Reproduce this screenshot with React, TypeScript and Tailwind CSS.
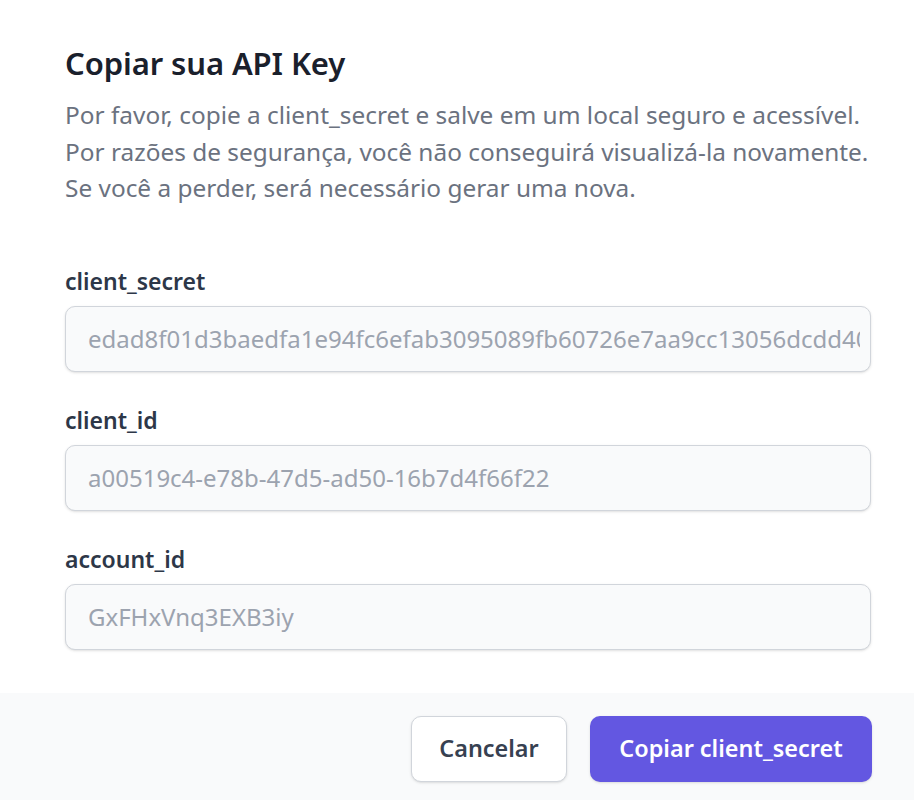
import React from "react";

const fields = [
  {
    label: "client_secret",
    value:
      "edad8f01d3baedfa1e94fc6efab3095089fb60726e7aa9cc13056dcdd40f3a9b27c1e5d8",
  },
  { label: "client_id", value: "a00519c4-e78b-47d5-ad50-16b7d4f66f22" },
  { label: "account_id", value: "GxFHxVnq3EXB3iy" },
];

export default function App() {
  return (
    <div className="w-[914px] h-[800px] bg-white flex flex-col font-['Noto_Sans',sans-serif] overflow-hidden">
      <div className="flex-1 pl-[65px] pr-[43px] pt-[42px]">
        <h2 className="text-[31px] leading-[42px] font-semibold text-[#1a202c] tracking-[-0.1px]">
          Copiar sua API Key
        </h2>
        <p className="mt-[13px] text-[24.4px] leading-[36.5px] text-[#6b7280]">
          Por favor, copie a client_secret e salve em um local seguro e acessível.
          <br />
          Por razões de segurança, você não conseguirá visualizá-la novamente.
          <br />
          Se você a perder, será necessário gerar uma nova.
        </p>
        <div className="mt-[59px] flex flex-col gap-[33px]">
          {fields.map((f) => (
            <div key={f.label} className="flex flex-col">
              <label className="text-[23px] leading-[30px] font-semibold text-[#2d3748] mb-[10px]">
                {f.label}
              </label>
              <div className="h-[66px] w-full rounded-[10px] border border-[#d1d5db] bg-[#f9fafb] pl-[22px] pr-[10px] shadow-sm flex items-center">
                <div className="overflow-hidden whitespace-nowrap text-[24px] text-[#9ca3af] w-full">
                  {f.value}
                </div>
              </div>
            </div>
          ))}
        </div>
      </div>
      <div className="h-[107px] bg-[#f9fafb] pt-[23px] pr-[42px] flex justify-end items-start gap-[23px]">
        <button className="h-[66px] w-[156px] rounded-[10px] border border-[#d1d5db] bg-white text-[23.4px] font-semibold text-[#374151] shadow-sm">
          Cancelar
        </button>
        <button className="h-[66px] w-[282px] rounded-[10px] bg-[#6357e1] text-[23.4px] font-semibold text-white shadow-sm">
          Copiar client_secret
        </button>
      </div>
    </div>
  );
}
